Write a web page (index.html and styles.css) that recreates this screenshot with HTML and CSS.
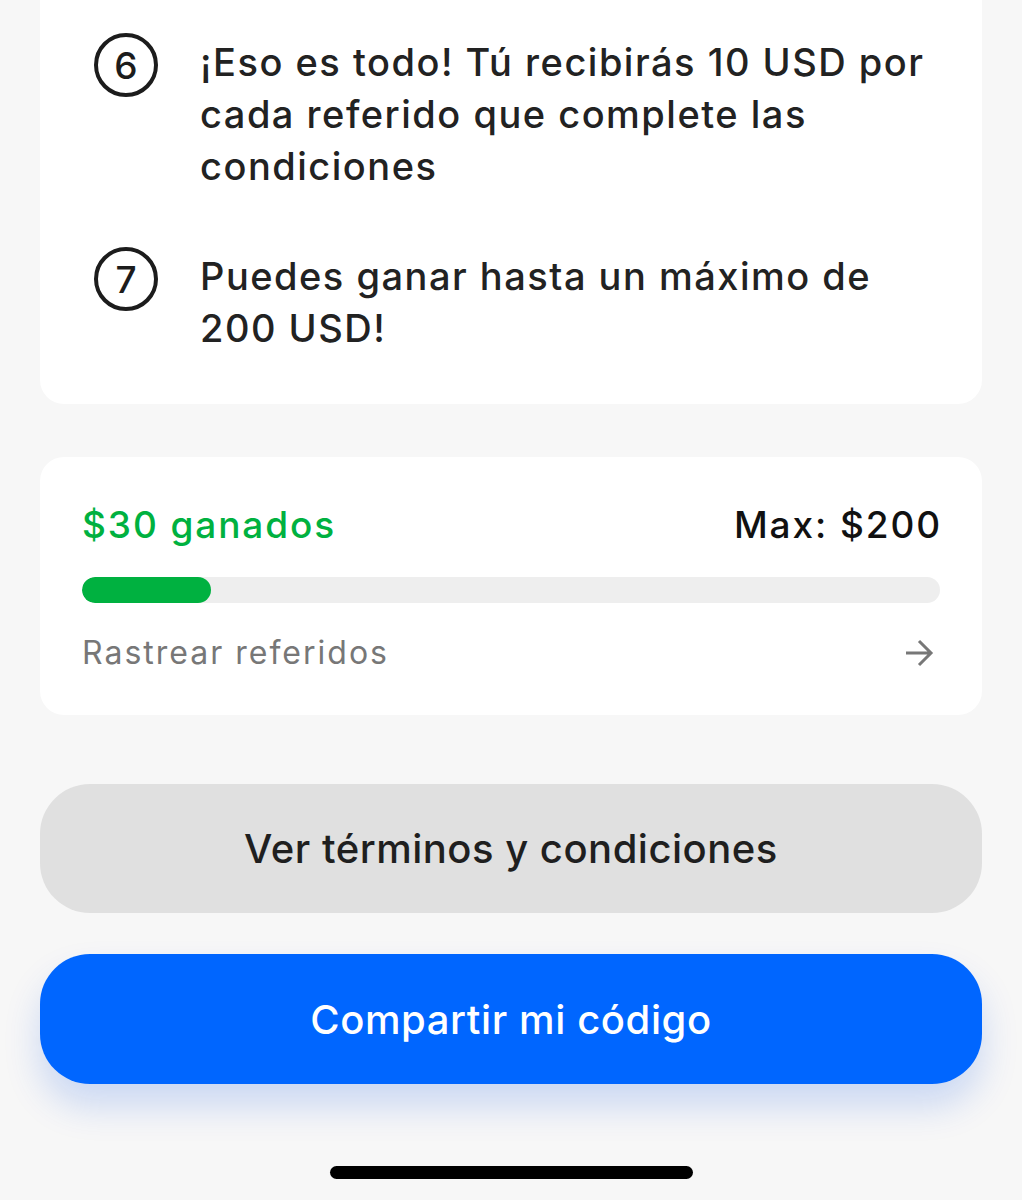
FILE: index.html
```html
<!DOCTYPE html>
<html lang="es">
<head>
<meta charset="utf-8">
<title>Referidos</title>
<link rel="stylesheet" href="styles.css">
</head>
<body>
<main class="page">
  <section class="card steps">
    <div class="step">
      <div class="num"><span class="circle">6</span></div>
      <p class="step-text">¡Eso es todo! Tú recibirás 10 USD por cada referido que complete las condiciones</p>
    </div>
    <div class="step">
      <div class="num"><span class="circle">7</span></div>
      <p class="step-text">Puedes ganar hasta un máximo de 200 USD!</p>
    </div>
  </section>

  <section class="card progress">
    <div class="progress-head">
      <span class="earned">$30 ganados</span>
      <span class="max">Max: $200</span>
    </div>
    <div class="track"><div class="fill" style="width:15%"></div></div>
    <div class="track-link">
      <span>Rastrear referidos</span>
      <svg class="arrow" width="30" height="30" viewBox="0 0 30 30" aria-hidden="true">
        <path d="M2 15H27M15 3L27 15L15 27" fill="none" stroke="#777" stroke-width="3" stroke-linecap="butt" stroke-linejoin="miter"/>
      </svg>
    </div>
  </section>

  <button class="btn btn-secondary">Ver términos y condiciones</button>
  <button class="btn btn-primary">Compartir mi código</button>

  <div class="home-indicator"></div>
</main>
</body>
</html>
```

FILE: styles.css
```css
* {
  box-sizing: border-box;
}

html, body {
  margin: 0;
  padding: 0;
}

body {
  background: #f7f7f7;
  font-family: Inter, "Noto Sans", "Liberation Sans", sans-serif;
  color: #222222;
  width: 1022px;
  height: 1200px;
  overflow: hidden;
}

.page {
  padding: 0 40px;
  display: flex;
  flex-direction: column;
}

.card {
  background: #ffffff;
  border-radius: 24px;
}

.steps {
  border-radius: 0 0 24px 24px;
  padding: 36px 36px 50px 54px;
  display: flex;
  flex-direction: column;
  gap: 58px;
}

.step {
  display: flex;
  gap: 42px;
  align-items: flex-start;
}

.num {
  flex: none;
  width: 64px;
  height: 52px;
  padding-top: 6px;
  display: flex;
  align-items: center;
  justify-content: center;
}

.circle {
  flex: none;
  width: 64px;
  height: 64px;
  border: 4px solid #1c1c1c;
  border-radius: 50%;
  display: flex;
  align-items: center;
  justify-content: center;
  font-size: 37px;
  font-weight: 500;
  color: #1c1c1c;
}

.step-text {
  margin: 0;
  font-size: 38px;
  line-height: 52px;
  font-weight: 500;
  letter-spacing: 1.5px;
  color: #222222;
}

.progress {
  margin-top: 53px;
  padding: 46px 42px 42px 42px;
}

.progress-head {
  display: flex;
  justify-content: space-between;
  align-items: baseline;
  font-size: 37px;
  line-height: 44px;
  font-weight: 500;
  letter-spacing: 1.9px;
}

.earned {
  color: #00b140;
}

.max {
  color: #111111;
  margin-right: -2px;
}

.track {
  margin-top: 30px;
  height: 26px;
  border-radius: 13px;
  background: #eeeeee;
  overflow: hidden;
}

.fill {
  height: 100%;
  border-radius: 13px;
  background: #00b140;
}

.track-link {
  margin-top: 30px;
  display: flex;
  justify-content: space-between;
  align-items: center;
  font-size: 32px;
  line-height: 40px;
  letter-spacing: 2px;
  color: #777777;
}

.arrow {
  margin-right: 6px;
}

.btn {
  display: flex;
  align-items: center;
  justify-content: center;
  width: 100%;
  border: none;
  border-radius: 50px;
  font-family: inherit;
  font-size: 40px;
  font-weight: 500;
  letter-spacing: 0.5px;
  padding: 0;
}

.btn-secondary {
  margin-top: 69px;
  height: 129px;
  background: #e0e0e0;
  color: #1f1f1f;
}

.btn-primary {
  margin-top: 41px;
  height: 130px;
  background: #0066ff;
  color: #ffffff;
  letter-spacing: 0.6px;
  box-shadow: 0 22px 36px rgba(0, 80, 230, 0.18);
}

.home-indicator {
  margin: 82px auto 0;
  width: 363px;
  height: 13px;
  border-radius: 7px;
  background: #000000;
}
```
